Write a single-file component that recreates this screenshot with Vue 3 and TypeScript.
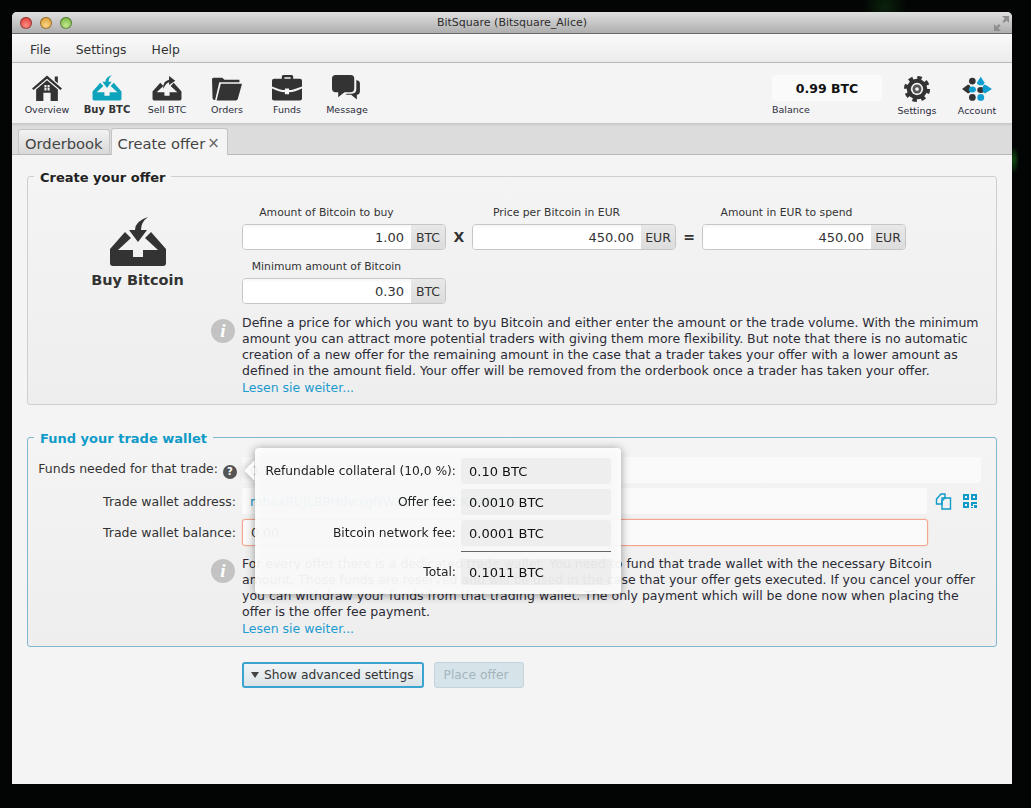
<script setup lang="ts">
interface NavItem {
  label: string
  active?: boolean
  color?: string
  paths: string[]
}

const TRAY =
  'M1 32 L16 15 L22 21 L9 33 H24 V40 H34 V33 H49 L36 21 L42 15 L57 32 V46 Q57 49 54 49 H4 Q1 49 1 46 Z'

const navItems: NavItem[] = [
  {
    label: 'Overview',
    paths: [
      'M0 26 L29 1 L58 26 L55 29 L29 7 L3 29 Z M44 3 H50 V16 L44 11 Z',
      'M8 28 L29 10 L50 28 V50 H36 V34 H22 V50 H8 Z M24 19 V24 H28 V19 Z M30 19 V24 H34 V19 Z M24 25 V30 H28 V25 Z M30 25 V30 H34 V25 Z'
    ]
  },
  {
    label: 'Buy BTC',
    active: true,
    color: '#0ea3bd',
    paths: [TRAY, 'M20 13 H26 Q26 4 39 0 Q32 5 32 13 H38 L29 25 Z']
  },
  {
    label: 'Sell BTC',
    paths: [TRAY, 'M22 27 Q20 12 33 9 V2 L45 11 L33 19 V14 Q26 16 22 27 Z']
  },
  {
    label: 'Orders',
    paths: [
      'M0 8 Q0 5 3 5 H20 L24 9 H53 V14 H14 L6 48 H4 Q1 48 1 44 Z',
      'M17 17 H58 L50 46 Q49 49 46 49 H9 Z'
    ]
  },
  {
    label: 'Funds',
    paths: [
      'M19 8 V3 Q19 0 22 0 H38 Q41 0 41 3 V8 H36 V4 H24 V8 Z',
      'M4 7 H54 Q58 7 58 11 V22 Q40 29 33 29 V26 H25 V29 Q16 29 0 22 V11 Q0 7 4 7 Z',
      'M0 26 Q14 33 25 33 V37 H33 V33 Q44 33 58 26 V46 Q58 49 54 49 H4 Q0 49 0 46 Z'
    ]
  },
  {
    label: 'Message',
    paths: [
      'M7 0 H36 Q43 0 43 7 V26 Q43 33 36 33 H24 L12 43 V33 H7 Q0 33 0 26 V7 Q0 0 7 0 Z',
      'M47 10 Q54 10 54 17 V31 Q54 38 48 38 V47 L37 38 H26 L29 36 H38 Q47 36 47 27 Z'
    ]
  }
]

const fields = [
  { label: 'Amount of Bitcoin to buy', value: '1.00', unit: 'BTC', sep: 'X' },
  { label: 'Price per Bitcoin in EUR', value: '450.00', unit: 'EUR', sep: '=' },
  { label: 'Amount in EUR to spend', value: '450.00', unit: 'EUR', sep: '' }
]

const offerHelp = [
  'Define a price for which you want to byu Bitcoin and either enter the amount or the trade volume. With the minimum',
  'amount you can attract more potential traders with giving them more flexibility. But note that there is no automatic',
  'creation of a new offer for the remaining amount in the case that a trader takes your offer with a lower amount as',
  'defined in the amount field. Your offer will be removed from the orderbook once a trader has taken your offer.'
]

const walletHelp = [
  'For every offer there is a dedicated trade wallet. You need to fund that trade wallet with the necessary Bitcoin',
  'amount. Those funds are reserved and will be used in the case that your offer gets executed. If you cancel your offer',
  'you can withdraw your funds from that trading wallet. The only payment which will be done now when placing the',
  'offer is the offer fee payment.'
]

const costs = [
  { label: 'Refundable collateral (10,0 %):', value: '0.10 BTC' },
  { label: 'Offer fee:', value: '0.0010 BTC' },
  { label: 'Bitcoin network fee:', value: '0.0001 BTC' }
]
</script>

<template>
  <div class="window">
    <header class="titlebar">
      <div class="lights">
        <span class="light red"></span>
        <span class="light amber"></span>
        <span class="light green"></span>
      </div>
      <span class="title">BitSquare (Bitsquare_Alice)</span>
      <svg class="fullscreen" viewBox="0 0 15 15" width="15" height="15" aria-hidden="true">
        <path d="M8 0 H15 V7 L12.6 4.6 L10 7 L8.4 5.4 L10.8 2.8 Z" fill="#8f8f8f" />
        <path d="M7 15 H0 V8 L2.4 10.4 L5 8 L6.6 9.6 L4.2 12.2 Z" fill="#8f8f8f" />
      </svg>
    </header>

    <nav class="menubar">
      <span>File</span>
      <span>Settings</span>
      <span>Help</span>
    </nav>

    <div class="toolbar">
      <div v-for="item in navItems" :key="item.label" class="nav-item" :class="{ active: item.active }">
        <svg viewBox="0 0 58 50" width="30" height="26" aria-hidden="true">
          <path v-for="d in item.paths" :key="d" :d="d" :fill="item.color || '#333'" fill-rule="evenodd" />
        </svg>
        <span>{{ item.label }}</span>
      </div>

      <div class="spacer"></div>

      <div class="balance">
        <div class="balance-value">0.99 BTC</div>
        <span>Balance</span>
      </div>

      <div class="nav-item wide">
        <svg viewBox="0 0 30 30" width="28" height="28" aria-hidden="true">
          <circle cx="15" cy="15" r="11.5" fill="none" stroke="#333" stroke-width="5" stroke-dasharray="4.5 4.53" />
          <circle cx="15" cy="15" r="11" fill="#333" />
          <circle cx="15" cy="15" r="6.6" fill="#f4f4f4" />
          <circle cx="15" cy="15" r="4.8" fill="#555" />
          <circle cx="15" cy="15" r="2" fill="#f4f4f4" />
        </svg>
        <span>Settings</span>
      </div>

      <div class="nav-item wide">
        <svg viewBox="0 0 34 30" width="34" height="28" aria-hidden="true">
          <path d="M1 15 L7 10.5 Q10 9.5 10 15 Q10 20.5 7 19.5 Z" fill="#333" />
          <circle cx="12" cy="6.5" r="3.6" fill="#333" />
          <circle cx="12" cy="24" r="3.6" fill="#333" />
          <ellipse cx="21" cy="16" rx="3.8" ry="3.2" fill="#333" />
          <path d="M21 2 L25 8 Q25 11 21 11 Q17 11 17 8 Z" fill="#0f9ed0" />
          <path d="M33 15 L26 10.5 Q23 10 23 15 Q23 20 26 19.5 Z" fill="#0f9ed0" />
          <circle cx="21" cy="24" r="3.7" fill="#0f9ed0" />
          <ellipse cx="12" cy="15.5" rx="3.8" ry="3.2" fill="#0f9ed0" />
        </svg>
        <span>Account</span>
      </div>
    </div>

    <div class="tabs">
      <div class="tab">Orderbook</div>
      <div class="tab current">Create offer<span class="close">×</span></div>
    </div>

    <main class="content">
      <section class="group offer">
        <h2 class="group-title">Create your offer</h2>

        <div class="side">
          <svg viewBox="0 0 58 50" width="58" height="50" aria-hidden="true">
            <path :d="TRAY" fill="#333" />
            <path d="M20 13 H26 Q26 4 39 0 Q32 5 32 13 H38 L29 25 Z" fill="#333" />
          </svg>
          <strong>Buy Bitcoin</strong>
        </div>

        <div class="amounts">
          <div class="amount-row">
            <template v-for="f in fields" :key="f.label">
              <div class="amount">
                <label>{{ f.label }}</label>
                <div class="input-group">
                  <span class="input">{{ f.value }}</span>
                  <span class="unit">{{ f.unit }}</span>
                </div>
              </div>
              <b v-if="f.sep" class="sep">{{ f.sep }}</b>
            </template>
          </div>
          <div class="amount">
            <label>Minimum amount of Bitcoin</label>
            <div class="input-group">
              <span class="input">0.30</span>
              <span class="unit">BTC</span>
            </div>
          </div>
        </div>

        <span class="info-icon">i</span>
        <div class="help">
          <div v-for="line in offerHelp" :key="line">{{ line }}</div>
          <a class="more">Lesen sie weiter...</a>
        </div>
      </section>

      <section class="group wallet">
        <h2 class="group-title">Fund your trade wallet</h2>

        <div class="wallet-row">
          <label class="needs">Funds needed for that trade: <span class="question">?</span></label>
          <span class="readonly">0.1011 BTC</span>
        </div>
        <div class="wallet-row">
          <label>Trade wallet address:</label>
          <span class="readonly address">mhaxRUJLB9HdwxgNW3y7pQmTcKx4ZeVn</span>
          <svg class="tool" viewBox="0 0 17 17" width="17" height="17" aria-hidden="true">
            <path d="M6 1 H10 V5 L7 5 V11 H1.5 V6 Z" fill="none" stroke="#0f9ac8" stroke-width="1.4" />
            <path d="M10 5 H15.5 V16 H7 V8 Z" fill="none" stroke="#0f9ac8" stroke-width="1.4" />
          </svg>
          <svg class="tool" viewBox="0 0 14 14" width="14" height="14" aria-hidden="true">
            <path
              d="M0 0 H6 V6 H0 Z M2 2 V4 H4 V2 Z M8 0 H14 V6 H8 Z M10 2 V4 H12 V2 Z M0 8 H6 V14 H0 Z M2 10 V12 H4 V10 Z M8 8 H14 V10 H10 V12 H8 Z M11 11 H14 V14 H11 Z M8 13 H10 V14 H8 Z"
              fill="#0f9ac8"
              fill-rule="evenodd"
            />
          </svg>
        </div>
        <div class="wallet-row tall">
          <label>Trade wallet balance:</label>
          <span class="readonly invalid">0.00</span>
        </div>

        <div class="wallet-help">
          <span class="info-icon">i</span>
          <div class="help">
            <div v-for="line in walletHelp" :key="line">{{ line }}</div>
            <a class="more">Lesen sie weiter...</a>
          </div>
        </div>

        <aside class="popover">
          <div v-for="c in costs" :key="c.label" class="cost">
            <span>{{ c.label }}</span>
            <b>{{ c.value }}</b>
          </div>
          <hr />
          <div class="cost">
            <span>Total:</span>
            <b>0.1011 BTC</b>
          </div>
        </aside>
      </section>

      <div class="actions">
        <button class="btn focused"><i class="caret"></i>Show advanced settings</button>
        <button class="btn disabled">Place offer</button>
      </div>
    </main>
  </div>
</template>

<style>
html,
body {
  margin: 0;
  height: 100%;
  background:
    radial-gradient(ellipse 5px 14px at 1014px 160px, #0d4a12 0, transparent 100%),
    radial-gradient(circle at 885px 6px, #0a220c 0, transparent 22px),
    #030504;
}
</style>

<style scoped>
.window {
  width: 1000px;
  height: 772px;
  margin: 12px 0 0 12px;
  background: #f4f4f4;
  border-radius: 5px 5px 0 0;
  overflow: hidden;
  display: flex;
  flex-direction: column;
  font-family: "DejaVu Sans", sans-serif;
  font-size: 12.5px;
  color: #333;
}

.titlebar {
  height: 21px;
  flex: none;
  display: flex;
  align-items: center;
  justify-content: center;
  position: relative;
  background: linear-gradient(#e0e0e0, #aeaeae);
  border-bottom: 1px solid #6a6a6a;
}

.title {
  font-size: 11px;
  color: #2d2d2d;
}

.lights {
  position: absolute;
  left: 8px;
  top: 5px;
  display: flex;
  gap: 8px;
}

.light {
  width: 12px;
  height: 12px;
  border-radius: 50%;
  box-shadow: inset 0 0 0 1px rgba(0, 0, 0, 0.35);
}

.red { background: radial-gradient(circle at 50% 70%, #ff8d84, #d42a26); }
.amber { background: radial-gradient(circle at 50% 70%, #fbd586, #d28f1e); }
.green { background: radial-gradient(circle at 50% 70%, #c3ea8e, #63a32d); }

.fullscreen {
  position: absolute;
  right: 3px;
  top: 4px;
}

.menubar {
  height: 29px;
  flex: none;
  box-sizing: border-box;
  display: flex;
  align-items: center;
  gap: 25px;
  padding: 2px 0 0 18px;
  font-size: 12.4px;
  background: linear-gradient(#fafafa, #ececec);
  border-bottom: 1px solid #bdbdbd;
}

.toolbar {
  height: 60px;
  flex: none;
  display: flex;
  padding: 12px 5px 0 5px;
  box-sizing: border-box;
  background: #f4f4f4;
  box-shadow: 0 1px 3px rgba(0, 0, 0, 0.15);
  position: relative;
}

.nav-item {
  width: 60px;
  display: flex;
  flex-direction: column;
  align-items: center;
  gap: 3px;
  font-size: 9.5px;
  color: #2c2c3c;
  white-space: nowrap;
}

.nav-item.active {
  font-weight: 700;
  font-size: 10px;
  color: #333;
}

.nav-item.wide {
  gap: 2px;
}

.spacer {
  flex: 1;
}

.balance {
  width: 110px;
  margin-right: 5px;
  font-size: 9.5px;
  color: #2c2c3c;
}

.balance-value {
  height: 26px;
  margin-bottom: 3px;
  display: flex;
  align-items: center;
  justify-content: center;
  background: #fafafa;
  border-radius: 3px;
  font-size: 12.5px;
  font-weight: 700;
  color: #111;
}

.tabs {
  height: 32px;
  flex: none;
  box-sizing: border-box;
  display: flex;
  align-items: flex-end;
  gap: 1px;
  padding-left: 6px;
  background: #dcdcdc;
  border-bottom: 1px solid #b8b8b8;
}

.tab {
  height: 25px;
  box-sizing: border-box;
  padding: 2px 6px 0;
  display: flex;
  align-items: center;
  font-size: 14.7px;
  color: #444;
  white-space: pre;
  background: linear-gradient(#f2f2f2, #d8d8d8);
  border: 1px solid #c4c4c4;
  border-bottom: none;
  border-radius: 3px 3px 0 0;
}

.tab.current {
  height: 27px;
  margin-bottom: -1px;
  padding-right: 7px;
  background: #f4f4f4;
}

.close {
  font-size: 15px;
  line-height: 14px;
  color: #666;
  margin-left: 2px;
}

.content {
  flex: 1;
  padding: 21px 15px 0;
}

.group {
  position: relative;
  box-sizing: border-box;
  border: 1px solid #cfcfcf;
  border-radius: 3px;
  background: linear-gradient(#f4f4f4, #eeeeee);
}

.group-title {
  position: absolute;
  left: 6px;
  top: -7px;
  margin: 0;
  padding: 0 6px;
  background: #f4f4f4;
  font-size: 13px;
  font-weight: 700;
  line-height: 15px;
  color: #222;
}

.offer {
  height: 229px;
  padding-top: 29px;
  display: grid;
  grid-template-columns: 183px 31px 1fr;
  grid-template-rows: 98px auto;
  row-gap: 11px;
}

.side {
  grid-column: 1 / 3;
  padding: 11px 0 0 5px;
  display: flex;
  flex-direction: column;
  align-items: center;
  gap: 5px;
}

.side strong {
  font-size: 14.5px;
  color: #333;
}

.amounts {
  display: flex;
  flex-direction: column;
  gap: 10px;
}

.amount-row {
  display: flex;
}

.amount {
  width: 204px;
}

.amount label {
  display: block;
  width: 169px;
  height: 18px;
  line-height: 14px;
  text-align: center;
  font-size: 10.8px;
  white-space: nowrap;
}

.input-group {
  height: 26px;
  display: flex;
  box-sizing: border-box;
  border: 1px solid #c6c6c6;
  border-radius: 4px;
  overflow: hidden;
}

.input {
  flex: 1;
  padding-right: 7px;
  display: flex;
  align-items: center;
  justify-content: flex-end;
  background: linear-gradient(#f6f6f6, #fff 4px);
  font-size: 13px;
}

.unit {
  width: 34px;
  display: flex;
  align-items: center;
  justify-content: center;
  background: linear-gradient(#e8e8e8, #dcdcdc);
  font-size: 12.5px;
}

.sep {
  width: 26px;
  text-align: center;
  align-self: flex-end;
  line-height: 26px;
  font-size: 14px;
  color: #333;
}

.offer > .info-icon {
  grid-column: 2;
  margin-top: 4px;
}

.info-icon {
  width: 24px;
  height: 24px;
  flex: none;
  border-radius: 50%;
  background: #c3c3c3;
  color: #fff;
  display: flex;
  align-items: center;
  justify-content: center;
  font-family: "Liberation Serif", serif;
  font-style: italic;
  font-weight: 700;
  font-size: 19px;
}

.help {
  line-height: 16px;
  font-size: 12.5px;
  white-space: nowrap;
  color: #2b2b35;
}

.more {
  display: block;
  color: #1d9ad0;
  line-height: 17px;
}

.wallet {
  height: 210px;
  margin-top: 32px;
  padding-top: 19px;
  border-color: #7fb7ce;
}

.wallet .group-title {
  color: #0f9ac8;
}

.wallet-row {
  display: flex;
  align-items: center;
  height: 26px;
  margin-bottom: 5px;
}

.wallet-row.tall {
  height: 27px;
}

.wallet-row label {
  width: 208px;
  margin-right: 6px;
  text-align: right;
  font-size: 12.5px;
  white-space: pre;
}

.wallet-row .needs {
  width: 209px;
  margin-right: 5px;
}

.needs .question {
  display: inline-flex;
  width: 14px;
  height: 14px;
  border-radius: 50%;
  margin-left: 1px;
  align-items: center;
  justify-content: center;
  background: #555;
  color: #fff;
  font-size: 10px;
  font-weight: 700;
  vertical-align: -2px;
}

.readonly {
  flex: 1;
  height: 100%;
  margin-right: 15px;
  padding-left: 8px;
  box-sizing: border-box;
  display: flex;
  align-items: center;
  background: #fafafa;
  border-radius: 3px;
  font-size: 12.5px;
  color: #333;
}

.address {
  flex: none;
  width: 685px;
  margin-right: 8px;
  color: #0f9ac8;
}

.invalid {
  flex: none;
  width: 686px;
  border: 1px solid #f4a58f;
  box-shadow: 0 0 2px #f8c4b4;
}

.tool + .tool {
  margin-left: 11px;
}

.wallet-help {
  margin: 10px 0 0 183px;
  display: flex;
  gap: 7px;
  align-items: flex-start;
}

.wallet-help .info-icon {
  margin-top: 3px;
}

.popover {
  position: absolute;
  left: 227px;
  top: 10px;
  width: 366px;
  height: 146px;
  box-sizing: border-box;
  padding: 10px;
  background: rgba(255, 255, 255, 0.93);
  border-radius: 4px;
  filter: drop-shadow(0 1px 5px rgba(0, 0, 0, 0.42));
}

.popover::before {
  content: "";
  position: absolute;
  left: -8px;
  top: 15px;
  width: 15px;
  height: 15px;
  transform: rotate(45deg);
  background: rgba(255, 255, 255, 0.93);
  clip-path: polygon(0 0, 0 100%, 100% 100%);
}

.cost {
  display: flex;
  align-items: center;
  justify-content: flex-end;
  gap: 5px;
  height: 26px;
  margin-bottom: 5px;
  font-size: 12.25px;
  color: #222;
  white-space: nowrap;
}

.cost b {
  width: 150px;
  height: 100%;
  box-sizing: border-box;
  padding-left: 8px;
  display: flex;
  align-items: center;
  flex: none;
  font-size: 13px;
  font-weight: 400;
  background: rgba(0, 0, 0, 0.04);
  border-radius: 3px;
  color: #111;
}

.popover hr {
  width: 150px;
  height: 1px;
  margin: 0 0 7px auto;
  border: none;
  background: #666;
}

.actions {
  margin: 15px 0 0 215px;
  display: flex;
  gap: 10px;
}

.btn {
  height: 26px;
  padding: 0 9px;
  box-sizing: border-box;
  display: flex;
  align-items: center;
  font-family: inherit;
  font-size: 12.25px;
  color: #333;
  background: linear-gradient(#f0f4f6, #dce4e8);
  border: 1px solid #c2d4dc;
  border-radius: 3px;
}

.btn.focused {
  border: 2px solid #3aa3cf;
  padding: 0 8px 0 7px;
}

.btn.disabled {
  padding-right: 14px;
  color: #a3b5bd;
  background: #d6e4ea;
}

.caret {
  width: 0;
  height: 0;
  margin-right: 5px;
  border: 4.5px solid transparent;
  border-top: 6px solid #444;
  border-bottom: none;
}
</style>
